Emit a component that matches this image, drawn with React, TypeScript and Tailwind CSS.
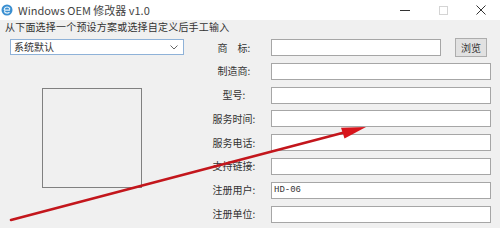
import type { FC } from "react";

const FONT = { fontFamily: '"Noto Sans CJK SC", "Noto Sans", sans-serif' };

const rows: { label: string; value?: string }[] = [
  { label: "商\u3000标:" },
  { label: "制造商:" },
  { label: "型号:" },
  { label: "服务时间:" },
  { label: "服务电话:" },
  { label: "支持链接:" },
  { label: "注册用户:", value: "HD-06" },
  { label: "注册单位:" },
];

const TitleBar: FC = () => (
  <div className="flex h-[20px] items-center bg-white">
    <svg width="12" height="12" viewBox="0 0 12 12" className="ml-[1px] mr-[5px]">
      <circle cx="6" cy="6" r="5.5" fill="#3a8fd1" />
      <path d="M3 6.2h6M3.2 6c0-1.8 1.3-3 2.9-3 1.5 0 2.6 1 2.8 2.4M3.3 7.2c.4 1.2 1.5 1.9 2.8 1.9 1 0 1.8-.4 2.4-1" stroke="#e8f4fb" strokeWidth="1.2" fill="none" />
    </svg>
    <span className="text-[11px] leading-none text-[#444]" style={FONT}>
      Windows OEM 修改器 v1.0
    </span>
    <div className="ml-auto flex h-full items-center">
      <div className="flex w-[38px] justify-center">
        <div className="h-px w-[10px] bg-[#333]" />
      </div>
      <div className="flex w-[38px] justify-center">
        <div className="h-[9px] w-[9px] border border-[#d4d4d4]" />
      </div>
      <div className="flex w-[38px] justify-center">
        <svg width="10" height="10" viewBox="0 0 10 10">
          <path d="M0.5 0.5l9 9M9.5 0.5l-9 9" stroke="#333" strokeWidth="1" />
        </svg>
      </div>
    </div>
  </div>
);

export default function App() {
  return (
    <div className="relative h-[228px] w-[500px] overflow-hidden bg-[#f0f0f0] text-[#333]" style={FONT}>
      <TitleBar />
      <div className="h-[19px] pl-[5px] pt-[1px] text-[10px] leading-[12px] tracking-[0.2px]">
        从下面选择一个预设方案或选择自定义后手工输入
      </div>
      <div className="flex">
        {/* left column: preset combo + preview box */}
        <div className="w-[208px] pl-[10px]">
          <div className="flex h-[16px] w-[174px] items-center justify-between border border-[#8fb2d8] bg-white pl-[3px] pr-[5px]">
            <span className="text-[10px] leading-none">系统默认</span>
            <svg width="8" height="5" viewBox="0 0 8 5">
              <path d="M0.5 0.5l3.5 3.5 3.5-3.5" stroke="#666" fill="none" />
            </svg>
          </div>
          <div className="ml-[32px] mt-[33px] h-[100px] w-[100px] border border-[#808080]" />
        </div>
        {/* right column: fields */}
        <div className="flex flex-col gap-[6.8px]">
          {rows.map((r, i) => (
            <div key={r.label} className="flex h-[17px] items-center">
              <div className="w-[52px] text-center text-[10px] leading-none whitespace-nowrap">{r.label}</div>
              <div
                className={`ml-[11px] flex h-[17px] items-center border border-[#a6a6a6] bg-white pl-[2px] ${
                  i === 0 ? "w-[170px]" : "w-[220px]"
                }`}
              >
                {r.value && (
                  <span className="text-[9px] leading-none text-[#333]" style={{ fontFamily: '"Liberation Mono", monospace' }}>
                    {r.value}
                  </span>
                )}
              </div>
              {i === 0 && (
                <div className="ml-[14px] flex h-[19px] w-[32px] items-center justify-center border border-[#adadad] bg-[#e1e1e1] text-[10px] leading-none">
                  浏览
                </div>
              )}
            </div>
          ))}
        </div>
      </div>
      {/* red annotation arrow over the window */}
      <svg className="pointer-events-none absolute left-0 top-0" width="500" height="228" viewBox="0 0 500 228">
        <line x1="11" y1="220" x2="346" y2="132" stroke="#c3161c" strokeWidth="2.6" strokeLinecap="round" />
        <polygon points="366,127 344.5,138.5 341,127.8" fill="#d8141b" />
      </svg>
    </div>
  );
}
